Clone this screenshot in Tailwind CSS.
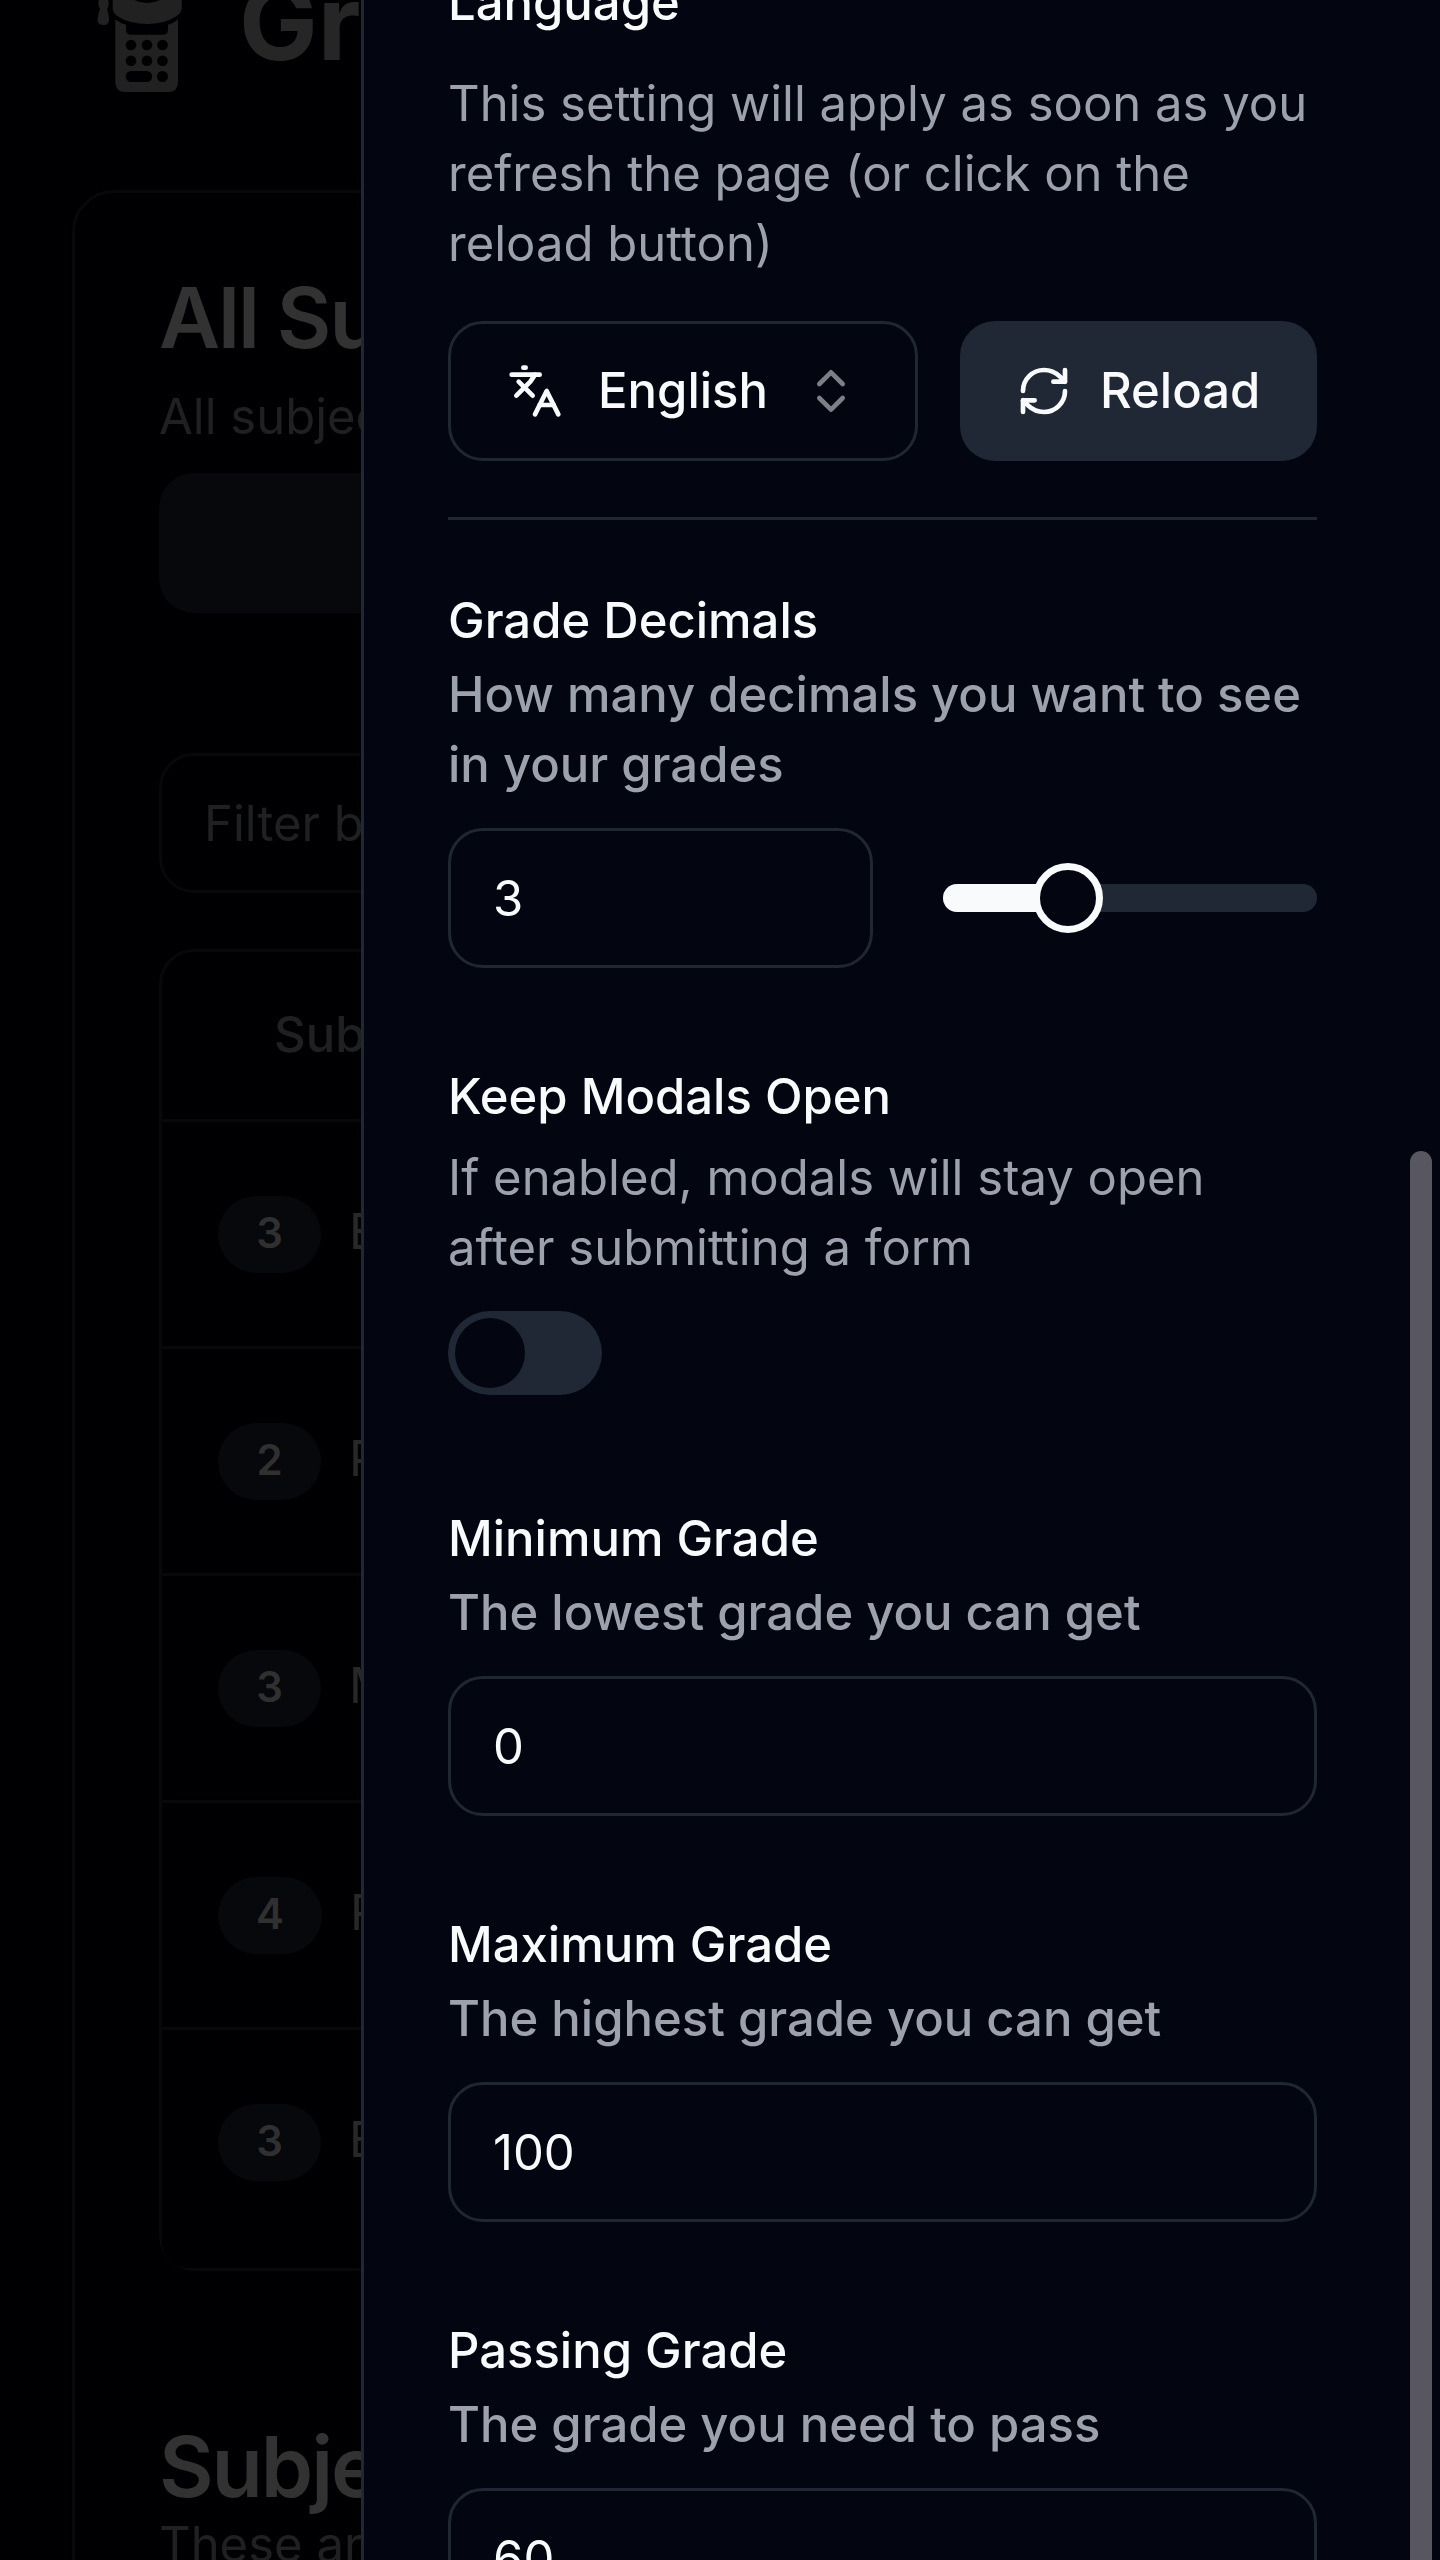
<!DOCTYPE html>
<html lang="en">
<head>
<meta charset="utf-8">
<title>Settings</title>
<script src="https://cdn.jsdelivr.net/npm/@tailwindcss/browser@4"></script>
</head>
<body class="relative h-[2560px] w-[1440px] overflow-hidden bg-[#000002] font-['Inter',sans-serif] text-[49px] leading-[70px] text-[#f9fafc]">

<!-- Dimmed page behind the sheet -->
<div class="h-[2560px] w-[1440px] overflow-hidden text-[#1f2021]">
  <header class="flex h-[190px] items-start pl-[94px]">
    <svg class="h-[96px] w-[92px] shrink-0" viewBox="94 0 92 96" fill="#212121">
      <path d="M99 0H108Q110 4 107 9Q109 14 109 20Q109 25 103.500 25Q97.500 25 97.500 20Q98 14 100 9Q97 4 99 0Z"/>
      <path d="M112.700 0H181.700V9Q181 13 176 16.500Q164 24 147 24Q130 24 118 16.500Q113 13 112.700 9Z"/>
      <path d="M134 0Q147 6 160 0Z" fill="#000002"/>
      <path d="M115.300 19.500Q120 23 126 24.800V30Q126 34.700 131 34.700H163Q168 34.700 168 30V24.800Q174 23 178 19.500V82Q178 92 168 92H125.300Q115.300 92 115.300 82Z"/>
      <g fill="#000002"><circle cx="131" cy="45" r="5.300"/><circle cx="147" cy="45" r="5.300"/><circle cx="162.500" cy="45" r="5.300"/><circle cx="131" cy="60.800" r="5.300"/><circle cx="147" cy="60.800" r="5.300"/><circle cx="162.500" cy="60.800" r="5.300"/><rect x="125.700" y="71" width="26.500" height="11" rx="5.500"/><circle cx="162.500" cy="76.500" r="5.500"/></g>
    </svg>
    <h1 class="-mt-[41px] ml-[53px] text-[105px] leading-[126px] font-bold text-[#262626]">GradeCalc</h1>
  </header>
  <main class="ml-[72px] h-[2500px] rounded-[42px] border-[3px] border-[#07080a] px-[84px] pt-[83px]">
    <h2 class="text-[84px] leading-[84px] font-semibold tracking-tight text-[#323232]">All Subjects</h2>
    <p class="mt-[22px]">All subjects you have</p>
    <div class="mt-[21px] h-[140px] rounded-[35px] bg-[#06080b]"></div>
    <div class="mt-[140px] flex h-[140px] items-center rounded-[35px] border-[3px] border-[#07080a] px-[42px] pt-[2px]">Filter by subject</div>
    <section class="mt-[56px] h-[1322px] rounded-[35px] border-[3px] border-[#07080a]">
      <div class="flex h-[170px] items-center border-b-[3px] border-[#07080a] pb-[2px] pl-[112px] font-medium">Subject</div>
      <div class="flex h-[227px] items-center gap-[28px] border-b-[3px] border-[#07080a] pl-[56px] text-[#282828]"><span class="flex h-[77px] w-[103px] items-center justify-center rounded-full bg-[#06080b] pb-[2px] text-[42px] font-semibold text-[#303030]">3</span><span class="pb-[4px]">English</span></div>
      <div class="flex h-[227px] items-center gap-[28px] border-b-[3px] border-[#07080a] pl-[56px] text-[#282828]"><span class="flex h-[77px] w-[103px] items-center justify-center rounded-full bg-[#06080b] pb-[2px] text-[42px] font-semibold text-[#303030]">2</span><span class="pb-[4px]">Physics</span></div>
      <div class="flex h-[227px] items-center gap-[28px] border-b-[3px] border-[#07080a] pl-[56px] text-[#282828]"><span class="flex h-[77px] w-[103px] items-center justify-center rounded-full bg-[#06080b] pb-[2px] text-[42px] font-semibold text-[#303030]">3</span><span class="pb-[4px]">Math</span></div>
      <div class="flex h-[227px] items-center gap-[28px] border-b-[3px] border-[#07080a] pl-[56px] text-[#282828]"><span class="flex h-[77px] w-[104px] items-center justify-center rounded-full bg-[#06080b] pb-[2px] text-[42px] font-semibold text-[#303030]">4</span><span class="pb-[4px]">Religion</span></div>
      <div class="flex h-[238px] items-center gap-[28px] rounded-bl-[26px] bg-[#000002] pb-[14px] pl-[56px] text-[#282828]"><span class="flex h-[77px] w-[103px] items-center justify-center rounded-full bg-[#06080b] pb-[2px] text-[42px] font-semibold text-[#303030]">3</span><span class="pb-[4px]">Biology</span></div>
    </section>
    <h2 class="mt-[154px] text-[84px] leading-[84px] font-semibold tracking-tight text-[#323232]">Subject Grades</h2>
    <p class="mt-[1px]">These are your grades</p>
  </main>
</div>

<!-- Settings sheet -->
<aside class="absolute inset-y-0 right-0 flex w-[1079px] flex-col overflow-hidden border-l-[3px] border-[#202836] bg-[#030611] pr-[123px] pl-[84px]">
  <section>
    <h3 class="-mt-[22px] leading-[49px] font-medium">Language</h3>
    <p class="mt-[42px] whitespace-nowrap text-[#9ca1ad]">This setting will apply as soon as you<br>refresh the page (or click on the<br>reload button)</p>
    <div class="mt-[42px] flex gap-[42px]">
      <button class="flex h-[140px] w-[470px] items-center rounded-[35px] border-[3px] border-[#202733] pl-[56px] font-medium">
        <svg class="h-[56px] w-[56px]" viewBox="0 0 24 24" fill="none" stroke="currentColor" stroke-width="2" stroke-linecap="round" stroke-linejoin="round"><path d="m5 8 6 6"/><path d="m4 14 6-6 2-3"/><path d="M2 5h12"/><path d="M7 2h1"/><path d="m22 22-5-10-5 10"/><path d="M14 18h6"/></svg>
        <span class="ml-[35px]">English</span>
        <svg class="ml-[35px] h-[56px] w-[56px] text-[#7d7f86]" viewBox="0 0 24 24" fill="none" stroke="currentColor" stroke-width="2" stroke-linecap="round" stroke-linejoin="round"><path d="m7 15 5 5 5-5"/><path d="m7 9 5-5 5 5"/></svg>
      </button>
      <button class="flex h-[140px] w-[357px] items-center rounded-[35px] bg-[#202836] pl-[56px] font-medium">
        <svg class="h-[56px] w-[56px]" viewBox="0 0 24 24" fill="none" stroke="currentColor" stroke-width="2" stroke-linecap="round" stroke-linejoin="round"><path d="M3 12a9 9 0 0 1 9-9 9.750 9.750 0 0 1 6.740 2.740L21 8"/><path d="M21 3v5h-5"/><path d="M21 12a9 9 0 0 1-9 9 9.750 9.750 0 0 1-6.740-2.740L3 16"/><path d="M8 16H3v5"/></svg>
        <span class="ml-[28px]">Reload</span>
      </button>
    </div>
  </section>

  <hr class="mt-[56px] border-t-[3px] border-[#202733]">

  <section class="mt-[76px]">
    <h3 class="leading-[49px] font-medium">Grade Decimals</h3>
    <p class="mt-[15px] font-medium whitespace-nowrap text-[#9ca1ad]">How many decimals you want to see<br>in your grades</p>
    <div class="mt-[28px] flex items-center gap-[70px]">
      <div class="flex h-[140px] w-[425px] items-center rounded-[35px] border-[3px] border-[#202733] px-[42px] pt-[2px]">3</div>
      <div class="relative h-[28px] w-[374px] rounded-full bg-[#202836]">
        <div class="h-[28px] w-1/3 rounded-l-full bg-[#f9fafc]"></div>
        <div class="absolute -top-[21px] left-[90px] h-[70px] w-[70px] rounded-full border-[7px] border-[#f9fafc] bg-[#030611]"></div>
      </div>
    </div>
  </section>

  <section class="mt-[104px]">
    <h3 class="leading-[49px] font-medium">Keep Modals Open</h3>
    <p class="mt-[22px] whitespace-nowrap text-[#9ca1ad]">If enabled, modals will stay open<br>after submitting a form</p>
    <div class="mt-[28px] flex h-[84px] w-[154px] items-center rounded-full bg-[#202836] p-[7px]">
      <div class="h-[70px] w-[70px] rounded-full bg-[#030611]"></div>
    </div>
  </section>

  <section class="mt-[119px]">
    <h3 class="leading-[49px] font-medium">Minimum Grade</h3>
    <p class="mt-[15px] font-medium text-[#9ca1ad]">The lowest grade you can get</p>
    <div class="mt-[28px] flex h-[140px] items-center rounded-[35px] border-[3px] border-[#202733] px-[42px] pt-[2px]">0</div>
  </section>

  <section class="mt-[104px]">
    <h3 class="leading-[49px] font-medium">Maximum Grade</h3>
    <p class="mt-[15px] font-medium text-[#9ca1ad]">The highest grade you can get</p>
    <div class="mt-[28px] flex h-[140px] items-center rounded-[35px] border-[3px] border-[#202733] px-[42px] pt-[2px]">100</div>
  </section>

  <section class="mt-[104px]">
    <h3 class="leading-[49px] font-medium">Passing Grade</h3>
    <p class="mt-[15px] font-medium text-[#9ca1ad]">The grade you need to pass</p>
    <div class="mt-[28px] flex h-[140px] items-center rounded-[35px] border-[3px] border-[#202733] px-[42px] pt-[2px]">60</div>
  </section>

  <!-- Scrollbar thumb -->
  <div class="absolute top-[1151px] right-[8px] h-[1500px] w-[22px] rounded-full bg-[#575661]"></div>
</aside>
</body>
</html>
